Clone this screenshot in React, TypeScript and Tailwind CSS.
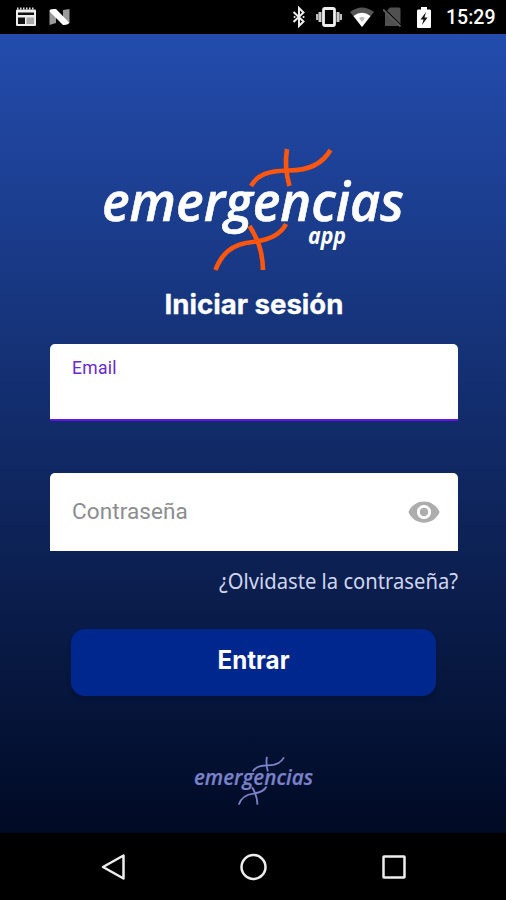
import { MdVisibility } from 'react-icons/md'

interface LogoProps {
    className: string
    color: string
    strandColor: string
    showApp?: boolean
}

function Logo({ className, color, strandColor, showApp }: LogoProps) {
    return (
        <svg viewBox="96 144 316 132" className={className} fill="none" overflow="visible">
            <g stroke={strandColor} strokeWidth="4.6">
                <path d="M252 186C259 174 270 171 288 170.500C311 171 324 163 331.500 150" />
                <path d="M288 149C286 161 287 174 290.500 186" />
                <path d="M216.500 270C222.500 254 232.500 244 253.500 242C270.500 240 281.500 235 287 224" />
                <path d="M250.500 226C259.500 240 263.500 252 264 270" />
            </g>
            <text
                x="103"
                y="220.500"
                fill={color}
                stroke={color}
                strokeWidth="0.6"
                textLength="302"
                lengthAdjust="spacingAndGlyphs"
                className="font-['Open_Sans','Noto_Sans',sans-serif] text-[55px] font-semibold italic"
            >
                emergencias
            </text>
            {showApp && (
                <text
                    x="309"
                    y="243.500"
                    fill={color}
                    textLength="38"
                    lengthAdjust="spacingAndGlyphs"
                    className="font-['Open_Sans','Noto_Sans',sans-serif] text-[23px] font-bold italic"
                >
                    app
                </text>
            )}
        </svg>
    )
}

function StatusBar() {
    return (
        <header className="flex h-[34px] items-center bg-black pl-[15px] pr-[11px] text-white">
            <svg viewBox="0 0 22 20" className="h-5 w-[22px]" fill="none">
                <path d="M2 1.500H20" stroke="#ddd" strokeWidth="2" strokeDasharray="1.500 1.500" />
                <rect x="1" y="2.500" width="20" height="16.500" rx="1" fill="#eee" />
                <path d="M3 5.500H19V8H3Z" fill="#111" />
                <path d="M3 10.500H10V17H3Z" fill="#111" />
                <path d="M11.500 10.500H19V17H11.500Z" fill="#aaa" />
            </svg>
            <svg viewBox="0 0 22 18" className="ml-3 h-[18px] w-[22px]">
                <path d="M.5 3L7 7V15L.5 17Z M14 2L20.500 1V15L14 11Z" fill="#999" />
                <path d="M.5 2Q3 .5 7 1L20.500 15Q18 17.500 14 17L1 4Z" fill="#fff" />
            </svg>

            <svg viewBox="0 0 14 22" className="ml-auto h-[22px] w-[14px]" fill="none" stroke="#eee" strokeWidth="2">
                <path d="M1.500 6L11.500 15.500L7 20V2L11.500 6.500L1.500 16" />
                <path d="M2.500 11H2.600M11.500 11H11.600" strokeLinecap="round" />
            </svg>
            <svg viewBox="0 0 26 20" className="ml-[10px] h-5 w-[26px]" fill="none">
                <rect x="7.500" y="1.500" width="11" height="17" rx="1.500" stroke="#eee" strokeWidth="2.800" />
                <path d="M4 5V15M22 5V15" stroke="#ccc" strokeWidth="3" />
                <path d="M1.200 7V13M24.800 7V13" stroke="#bbb" strokeWidth="2.400" />
            </svg>
            <svg viewBox="0 0 24 20" className="ml-[8px] h-5 w-6">
                <path d="M0 5Q12-4 24 5L12 20Z" fill="#555" />
                <path d="M3.500 9Q12 2.500 20.500 9L12 20Z" fill="#fff" />
                <path d="M9 11Q12 9 15 11L12 15Z" fill="#bbb" />
            </svg>
            <svg viewBox="0 0 20 20" className="ml-[9px] h-5 w-5">
                <path d="M7 .5H16Q17.500 .5 17.500 2V19H2V6Z" fill="#505050" />
                <path d="M1 2L19 20" stroke="#000" strokeWidth="2" />
                <path d="M0 2.500L17.500 19.500" stroke="#5c5c5c" strokeWidth="1.800" />
            </svg>
            <svg viewBox="0 0 14 21" className="ml-[14px] h-[21px] w-[14px]">
                <path d="M1 2.500H4V0H10V2.500H13Q14 2.500 14 4V20Q14 21 13 21H1Q0 21 0 20V4Q0 2.500 1 2.500Z" fill="#fff" />
                <path d="M9 5L3.500 12.500H6.500L5 18L10.500 10.500H7.500Z" fill="#111" />
            </svg>
            <span className="ml-[15px] w-[49px] whitespace-nowrap pt-0.5 text-[19.500px] leading-none font-medium">15:29</span>
        </header>
    )
}

function NavigationBar() {
    return (
        <nav className="flex h-[67px] items-center justify-between bg-black pr-[98px] pl-[100px]">
            <svg viewBox="0 0 28 28" className="size-7" fill="none" stroke="#eee" strokeWidth="2.500">
                <path d="M3 14L23.500 2.500V25.500Z" strokeLinejoin="round" />
            </svg>
            <svg viewBox="0 0 28 28" className="size-7" fill="none" stroke="#eee" strokeWidth="2.500">
                <circle cx="13.500" cy="14" r="12" />
            </svg>
            <svg viewBox="0 0 28 28" className="size-7" fill="none" stroke="#eee" strokeWidth="2.500">
                <rect x="3.500" y="3.500" width="21" height="21" rx=".5" />
            </svg>
        </nav>
    )
}

export default function App() {
    return (
        <div className="flex h-[900px] w-[506px] flex-col overflow-hidden font-[Roboto,sans-serif]">
            <StatusBar />
            <main className="flex h-[799px] flex-col items-center bg-linear-to-b/srgb from-[#234cad] to-[#000a24] pr-12 pl-[50px]">
                <Logo className="mt-[110px] mr-[2px] h-[132px] w-[316px] shrink-0" color="#fff" strandColor="#ff560d" showApp />

                <h1 className="mt-[9px] h-[59px] text-white">
                    <svg viewBox="0 0 180 40" className="h-10 w-[180px] overflow-visible">
                        <text
                            x="0.500"
                            y="29"
                            fill="currentColor"
                            stroke="currentColor"
                            strokeWidth="0.3"
                            textLength="179"
                            lengthAdjust="spacingAndGlyphs"
                            className="font-[Inter,sans-serif] text-[27px] font-bold"
                        >
                            Iniciar sesión
                        </text>
                    </svg>
                </h1>

                <label className="h-[77px] w-full shrink-0 rounded-t-[5px] border-b-2 border-[#6512ed] bg-white px-[22px] pt-[13px] text-[17.500px] leading-[22px] tracking-[0.3px] text-[#6728d2]">
                    Email
                </label>

                <div className="mt-[52px] flex h-[78px] w-full shrink-0 items-center justify-between rounded-t-[5px] bg-white pr-[17px] pl-[22px]">
                    <span className="text-[22.500px] tracking-[0.1px] text-[#8b8d91]">Contraseña</span>
                    <MdVisibility className="size-[34px] text-[#adadad]" />
                </div>

                <a className="mt-[16px] h-[30px] self-end text-[#d0d5ee]">
                    <svg viewBox="0 0 240 30" className="h-[30px] w-60 overflow-visible">
                        <text
                            x="1"
                            y="22"
                            fill="currentColor"
                            textLength="239"
                            lengthAdjust="spacingAndGlyphs"
                            className="font-['Noto_Sans',sans-serif] text-[21px]"
                        >
                            ¿Olvidaste la contraseña?
                        </text>
                    </svg>
                </a>

                <button className="mt-[32px] mr-[2px] flex h-[67px] w-[365px] shrink-0 justify-center rounded-[14px] bg-[#00278e] pt-[12px] text-white shadow-md">
                    <svg viewBox="0 0 74 40" className="h-10 w-[74px]">
                        <text
                            x="1.500"
                            y="28"
                            fill="currentColor"
                            textLength="72"
                            lengthAdjust="spacingAndGlyphs"
                            className="font-[Inter,sans-serif] text-[25px] font-bold"
                        >
                            Entrar
                        </text>
                    </svg>
                </button>

                <Logo className="mt-[59px] mr-[2px] h-[52px] w-[125px] shrink-0" color="#7b82c9" strandColor="#7b82c9" />
            </main>
            <NavigationBar />
        </div>
    )
}
